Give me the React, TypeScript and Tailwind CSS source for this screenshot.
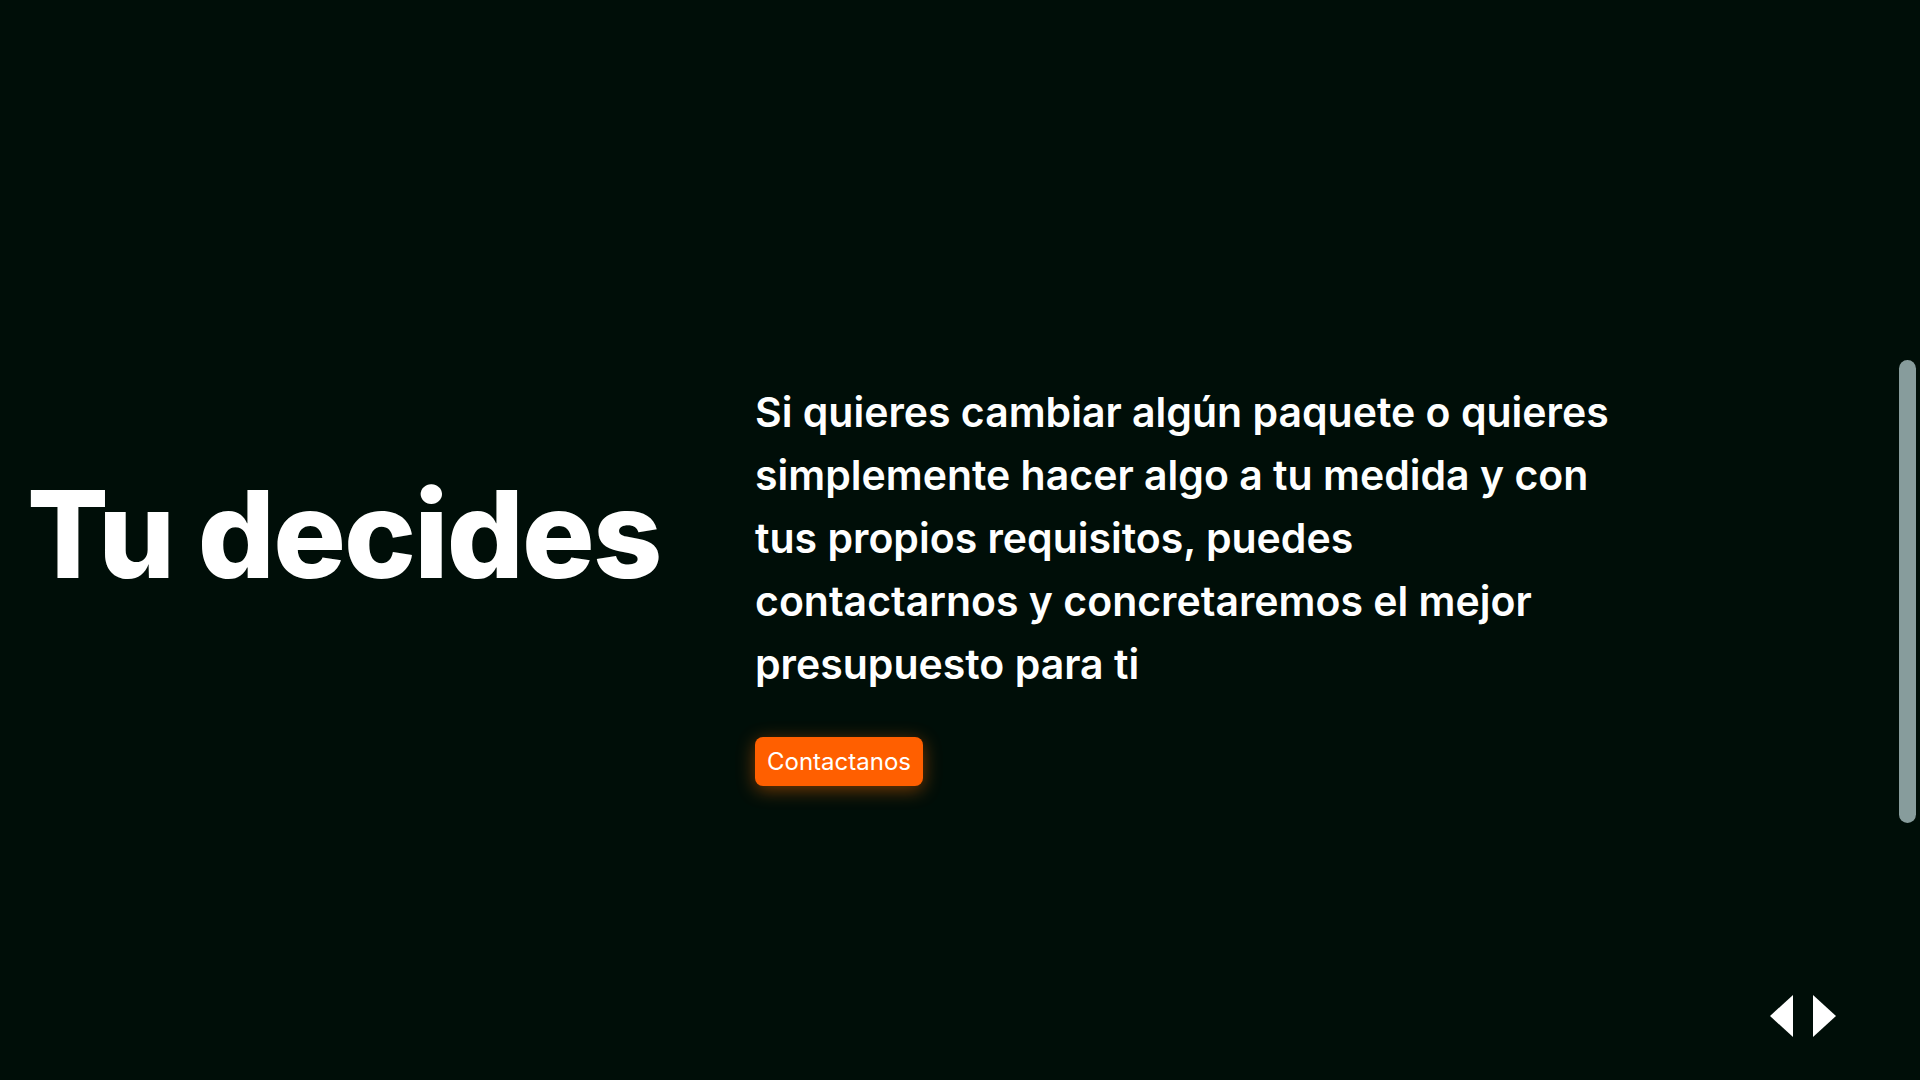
import React from "react";

const lines = [
  "Si quieres cambiar algún paquete o quieres",
  "simplemente hacer algo a tu medida y con",
  "tus propios requisitos, puedes",
  "contactarnos y concretaremos el mejor",
  "presupuesto para ti",
];

export default function App() {
  return (
    <main
      className="relative w-full h-screen overflow-hidden bg-[#000e08] text-white"
      style={{ fontFamily: "Inter, 'Noto Sans', sans-serif" }}
    >
      <section className="flex h-full items-center">
        {/* left: heading */}
        <div className="w-[755px] shrink-0 pl-[27px] pb-[12px]">
          <h1 className="text-[121px] font-extrabold leading-none tracking-[-0.015em]">
            Tu decides
          </h1>
        </div>

        {/* right: copy + action */}
        <div className="flex flex-col items-start pt-[87px]">
          <p className="text-[41px] font-semibold leading-[63px] whitespace-nowrap">
            {lines.map((l) => (
              <span key={l} className="block">
                {l}
              </span>
            ))}
          </p>
          <button className="mt-[41px] h-[49px] w-[168px] rounded-[8px] bg-[#ff5f00] text-[24px] font-normal text-white shadow-[0_4px_18px_rgba(255,110,0,0.45)]">
            Contactanos
          </button>
        </div>
      </section>

      {/* custom scroll thumb */}
      <div className="absolute right-[4px] top-[360px] w-[17px] h-[463px] rounded-full bg-[#879c9c]" />

      {/* slide arrows */}
      <div className="absolute right-[84px] bottom-[43px] flex gap-[20px]">
        <svg width="23" height="42" viewBox="0 0 23 42">
          <polygon points="23,0 23,42 0,21" fill="#fff" />
        </svg>
        <svg width="23" height="42" viewBox="0 0 23 42">
          <polygon points="0,0 0,42 23,21" fill="#fff" />
        </svg>
      </div>
    </main>
  );
}
